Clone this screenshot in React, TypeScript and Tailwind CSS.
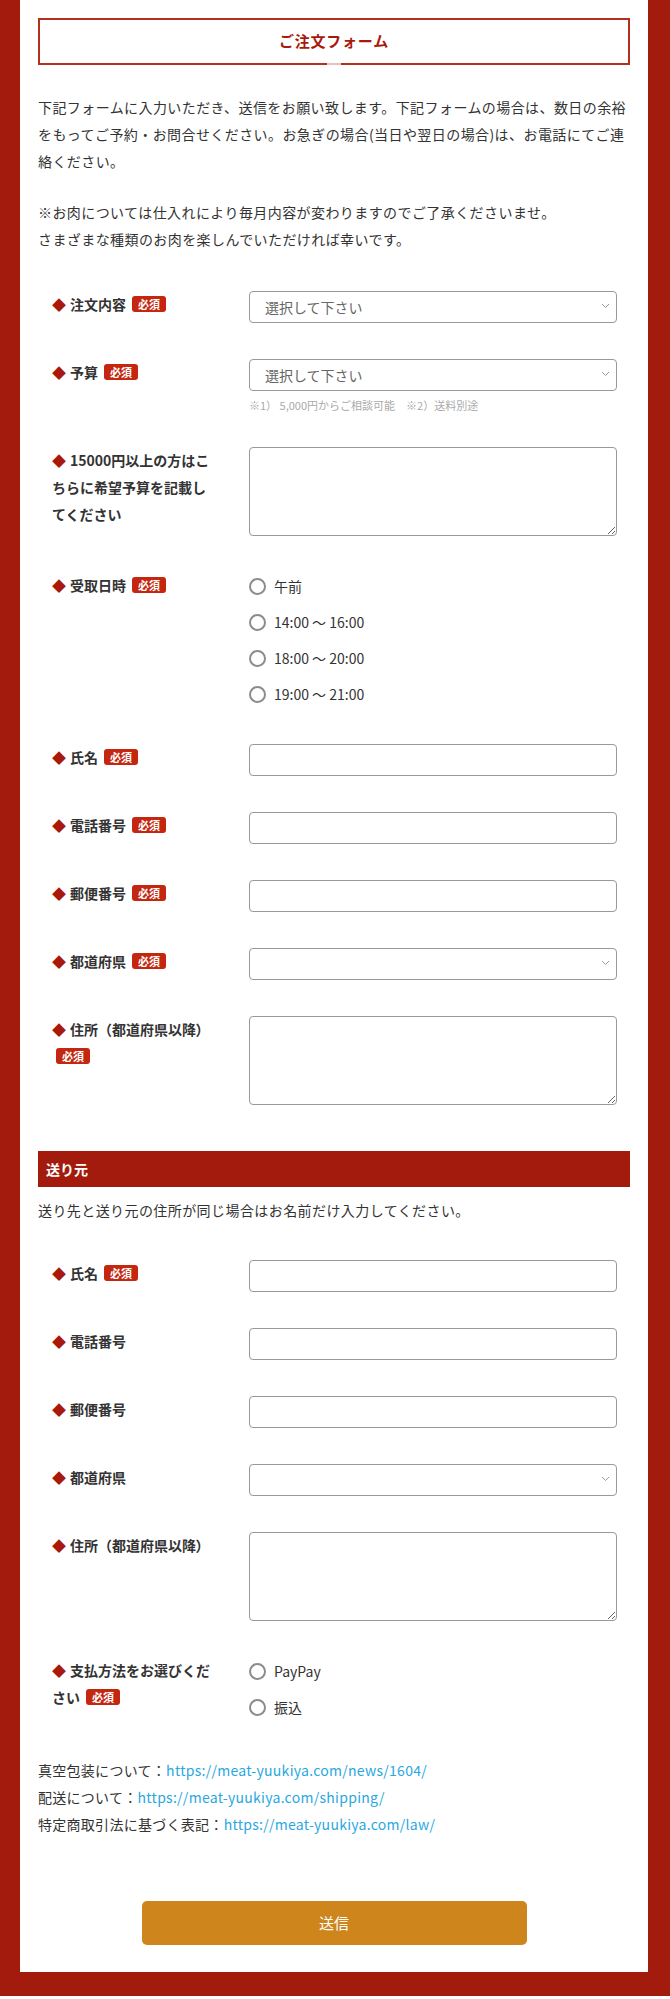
import React from 'react';

function Required() {
  return (
    <span className="inline-block align-[1px] ml-[6px] px-[6px] rounded-[3px] bg-[#c4260f] text-white text-[11px] font-bold leading-[16px]">
      必須
    </span>
  );
}

function Label({ children }: { children: React.ReactNode }) {
  return (
    <div className="text-[14px] font-bold leading-[27px] text-[#333]">
      <span className="text-[#a8190c] mr-[4px]">◆</span>
      {children}
    </div>
  );
}

function Row({ label, children }: { label: React.ReactNode; children: React.ReactNode }) {
  return (
    <div className="grid grid-cols-[211px_1fr] py-[18px]">
      <div className="pl-[14px] pr-[20px]">
        <Label>{label}</Label>
      </div>
      <div className="pr-[13px]">{children}</div>
    </div>
  );
}

function TextInput() {
  return <input type="text" className="block w-full h-[32px] border border-[#999] rounded-[4px] bg-white px-[10px] text-[14px]" />;
}

function Select({ placeholder }: { placeholder?: string }) {
  return (
    <div className="relative">
      <select className="block w-full h-[32px] appearance-none border border-[#999] rounded-[4px] bg-white px-[15px] text-[14px] text-[#666]">
        <option>{placeholder ?? ''}</option>
      </select>
      <svg className="absolute right-[7px] top-[12px] pointer-events-none" width="9" height="6" viewBox="0 0 9 6">
        <path d="M1 1l3.5 3.5L8 1" fill="none" stroke="#999" strokeWidth="1" />
      </svg>
    </div>
  );
}

function TextArea() {
  return <textarea className="block w-full h-[89px] border border-[#999] rounded-[4px] bg-white px-[10px] py-[6px] text-[14px]" />;
}

function Radios({ items }: { items: string[] }) {
  return (
    <div className="flex flex-col gap-[8px]">
      {items.map((item) => (
        <label key={item} className="flex items-center h-[28px] text-[14px] text-[#333]">
          <span className="w-[17px] h-[17px] rounded-full border-2 border-[#8c8c8c] bg-white mr-[8px]" />
          {item}
        </label>
      ))}
    </div>
  );
}

export default function App() {
  return (
    <div className="bg-[#a31b0d] pl-[20px] pr-[22px] pb-[24px] font-['Noto_Sans_CJK_JP',sans-serif]">
      <div className="bg-white px-[18px] pt-[18px] pb-[27px]">
        <div className="relative h-[47px] border-2 border-[#b3301f] flex items-center justify-center">
          <h2 className="text-[15px] font-bold tracking-[0.05em] text-[#a8190c]">ご注文フォーム</h2>
          <span className="absolute left-1/2 -translate-x-1/2 -bottom-[2px] w-[14px] h-[2px] bg-white/70" />
        </div>

        <p className="mt-[29px] text-[14px] leading-[27px] tracking-[0.03em] text-[#333]">
          下記フォームに入力いただき、送信をお願い致します。下記フォームの場合は、数日の余裕をもってご予約・お問合せください。お急ぎの場合(当日や翌日の場合)は、お電話にてご連絡ください。
        </p>
        <p className="mt-[24px] text-[14px] leading-[27px] tracking-[0.03em] text-[#333]">
          ※お肉については仕入れにより毎月内容が変わりますのでご了承くださいませ。
          <br />
          さまざまな種類のお肉を楽しんでいただければ幸いです。
        </p>

        <div className="mt-[20px]">
          <Row label={<>注文内容<Required /></>}>
            <Select placeholder="選択して下さい" />
          </Row>
          <Row label={<>予算<Required /></>}>
            <Select placeholder="選択して下さい" />
            <p className="mt-[8px] text-[11px] leading-[12px] text-[#aaa]">※1） 5,000円からご相談可能　※2）送料別途</p>
          </Row>
          <Row label={<>15000円以上の方はこ<br />ちらに希望予算を記載し<br />てください</>}>
            <TextArea />
          </Row>
          <Row label={<>受取日時<Required /></>}>
            <Radios items={['午前', '14:00 〜 16:00', '18:00 〜 20:00', '19:00 〜 21:00']} />
          </Row>
          <Row label={<>氏名<Required /></>}>
            <TextInput />
          </Row>
          <Row label={<>電話番号<Required /></>}>
            <TextInput />
          </Row>
          <Row label={<>郵便番号<Required /></>}>
            <TextInput />
          </Row>
          <Row label={<>都道府県<Required /></>}>
            <Select />
          </Row>
          <Row label={<>住所（都道府県以降<span className="[font-feature-settings:'palt']">）</span><br /><span className="-ml-[2px]"><Required /></span></>}>
            <TextArea />
          </Row>
        </div>

        <div className="mt-[28px] h-[36px] bg-[#a31b0d] flex items-center pl-[8px] text-[14px] font-bold text-white">
          送り元
        </div>
        <p className="mt-[10px] text-[14px] leading-[27px] tracking-[0.03em] text-[#333]">
          送り先と送り元の住所が同じ場合はお名前だけ入力してください。
        </p>

        <div className="mt-[18px]">
          <Row label={<>氏名<Required /></>}>
            <TextInput />
          </Row>
          <Row label="電話番号">
            <TextInput />
          </Row>
          <Row label="郵便番号">
            <TextInput />
          </Row>
          <Row label="都道府県">
            <Select />
          </Row>
          <Row label={<>住所（都道府県以降<span className="[font-feature-settings:'palt']">）</span></>}>
            <TextArea />
          </Row>
          <Row label={<>支払方法をお選びくだ<br />さい<Required /></>}>
            <Radios items={['PayPay', '振込']} />
          </Row>
        </div>

        <div className="mt-[18px] text-[14px] leading-[27px] tracking-[0.02em] text-[#333]">
          <p>真空包装について：<a href="#" className="text-[#29a8e0]">https://meat-yuukiya.com/news/1604/</a></p>
          <p>配送について：<a href="#" className="text-[#29a8e0]">https://meat-yuukiya.com/shipping/</a></p>
          <p>特定商取引法に基づく表記：<a href="#" className="text-[#29a8e0]">https://meat-yuukiya.com/law/</a></p>
        </div>

        <button className="block mx-auto mt-[63px] w-[385px] h-[44px] rounded-[5px] bg-[#cd851c] text-white text-[15px]">
          送信
        </button>
      </div>
    </div>
  );
}
